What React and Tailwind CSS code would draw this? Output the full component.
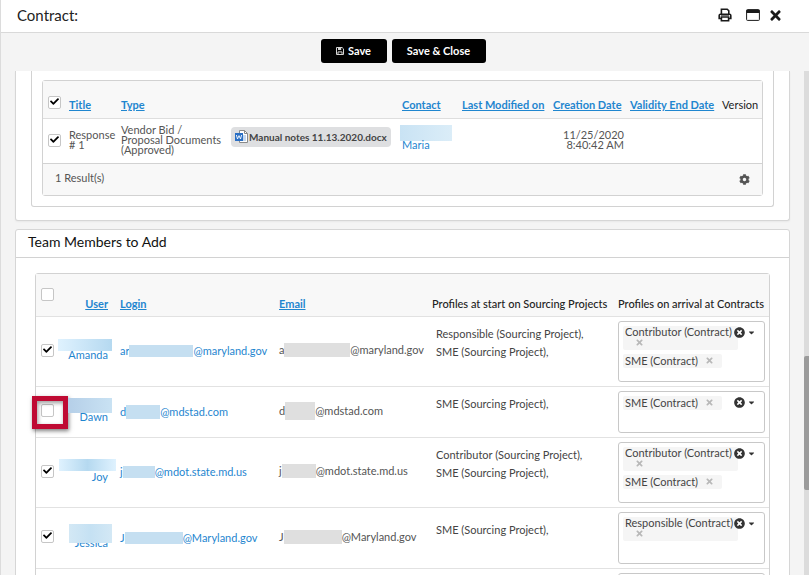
import { FaCheck, FaTimes, FaTimesCircle, FaCaretDown, FaCog } from 'react-icons/fa';

const teamMembers = [
  {
    name: 'Amanda',
    checked: true,
    nameMask: 'w-[54px] h-3 -mr-1 from-sky-100 to-[#b5d9f0]',
    nameClass: '',
    initial: 'ar',
    domain: '@maryland.gov',
    loginMask: 'w-16 h-3',
    emailInitial: 'a',
    emailMask: 'w-[68px] h-[14px]',
    start: ['Responsible (Sourcing Project),', 'SME (Sourcing Project),'],
    startClass: 'pt-2',
    arrival: ['Contributor (Contract)', 'SME (Contract)'],
    boxClass: 'h-[61px]',
  },
  {
    name: 'Dawn',
    checked: false,
    highlighted: true,
    nameMask: 'w-11 h-[15px] -mr-1 from-[#b5cfe8] to-[#c9e2f3]',
    nameClass: '',
    initial: 'd',
    domain: '@mdstad.com',
    loginMask: 'w-[34px] h-[14px]',
    emailInitial: 'd',
    emailMask: 'w-[30px] h-[18px]',
    start: ['SME (Sourcing Project),'],
    startClass: 'pt-2',
    arrival: ['SME (Contract)'],
    boxClass: 'h-[42px]',
  },
  {
    name: 'Joy',
    checked: true,
    nameMask: 'w-[57px] h-3 -mr-2 from-sky-100 via-[#b5d9f0] to-sky-100',
    nameClass: 'mt-0.5',
    initial: 'j',
    domain: '@mdot.state.md.us',
    loginMask: 'w-8 h-3',
    emailInitial: 'j',
    emailMask: 'w-[34px] h-[14px]',
    start: ['Contributor (Sourcing Project),', 'SME (Sourcing Project),'],
    startClass: 'pt-2',
    arrival: ['Contributor (Contract)', 'SME (Contract)'],
    boxClass: 'h-[61px]',
  },
  {
    name: 'Jessica',
    checked: true,
    nameMask: 'w-[43px] h-[19px] -mr-1 from-[#d3e8f5] via-[#c5e1f3] to-[#d3e8f5]',
    nameClass: '-mt-1',
    initial: 'J',
    domain: '@Maryland.gov',
    loginMask: 'w-[58px] h-3',
    emailInitial: 'J',
    emailMask: 'w-[58px] h-[14px]',
    start: ['SME (Sourcing Project),'],
    startClass: 'pt-[13px]',
    arrival: ['Responsible (Contract)'],
    boxClass: 'h-[52px]',
  },
];

const CheckBox = ({ label, checked = false }) => (
  <span className="relative block h-[13px] w-[13px]">
    <input
      type="checkbox"
      aria-label={label}
      defaultChecked={checked}
      className="peer block h-[13px] w-[13px] appearance-none rounded-xs border border-[#c6c6c6] bg-white"
    />
    <FaCheck className="pointer-events-none absolute top-px left-0.5 hidden h-[9px] w-[9px] text-black peer-checked:block" />
  </span>
);

const SortLink = ({ children }) => (
  <a href="#" className="font-bold text-[#1f86cf] underline">
    {children}
  </a>
);

const PrintIcon = () => (
  <svg viewBox="0 0 14 14" className="h-[14px] w-[14px]" fill="none" stroke="currentColor" strokeWidth="1.6">
    <path d="M3.4 6V1.2h5.8l1.6 1.6V6" />
    <path d="M3.4 10.5H1.2V7.6q0-1.3 1.3-1.3h9q1.3 0 1.3 1.3v2.9h-2" />
    <path d="M3.4 9h7.2v3.8H3.4z" />
    <path d="M3 6.8h8" />
  </svg>
);

const WindowIcon = () => (
  <svg viewBox="0 0 14 12" className="h-3 w-[14px]">
    <rect x="0.6" y="0.6" width="12.8" height="10.8" rx="0.8" fill="white" stroke="currentColor" strokeWidth="1" />
    <path d="M0.5 1h13v3h-13z" fill="currentColor" />
  </svg>
);

const SaveIcon = () => (
  <svg viewBox="0 0 8 8" className="h-2 w-2" fill="none" stroke="#d4d4d4" strokeWidth="1">
    <path d="M.5.5h5.6l1.4 1.4v5.6h-7z" />
    <path d="M2 1h3.2v2H2z" fill="#d4d4d4" stroke="none" />
    <path d="M2 7.2V4.9h4v2.3" />
  </svg>
);

const WordIcon = () => (
  <svg viewBox="0 0 13 13" className="h-[13px] w-[13px] shrink-0">
    <path d="M4.5.5h5l3 3v9h-8z" fill="white" stroke="#8a8a8a" />
    <path d="M9.5.5v3h3" fill="none" stroke="#8a8a8a" />
    <path d="M8 6h3M8 8h3M8 10h3" stroke="#6f9fd8" strokeWidth="0.8" />
    <path d="M0 3h8v8H0z" fill="#2a6fc4" />
    <path d="M1.4 5l1.1 4L4 5.6 5.5 9l1.1-4" fill="none" stroke="white" strokeWidth="0.9" />
  </svg>
);

const ProfilePicker = ({ member }) => (
  <div
    role="group"
    aria-label={`Profiles for ${member.name}`}
    className={`relative flex flex-col items-start gap-1 rounded-[3px] border border-[#c8c8c8] bg-white p-1 ${member.boxClass}`}
  >
    {member.arrival.map((profile) => {
      const long = profile.length > 15;
      return (
        <div
          key={profile}
          className={`flex rounded-xs bg-[#f5f5f5] leading-3 ${long ? 'h-6 w-[115px] flex-col items-start px-0.5' : 'h-[14px] w-[99px] items-center justify-between pr-2 pl-0.5'}`}
        >
          <span className="whitespace-nowrap">{profile}</span>
          <button type="button" aria-label={`Remove ${profile}`} className={long ? 'ml-[10px]' : ''}>
            <FaTimes className="h-[9px] w-[9px] text-[#b8b8b8]" />
          </button>
        </div>
      );
    })}
    <div className="absolute top-[5px] right-2 flex items-center gap-0.5 text-[#333]">
      <button type="button" aria-label="Clear">
        <FaTimesCircle className="h-[11px] w-[11px]" />
      </button>
      <button type="button" aria-label="Open">
        <FaCaretDown className="h-[9px] w-[9px]" />
      </button>
    </div>
  </div>
);

const TitleBar = () => (
  <header className="flex h-[33px] shrink-0 items-center justify-between border-b border-[#d9d9d9] bg-white pr-[26px] pb-0.5 pl-4">
    <h1 className="text-[15px] text-[#222]">Contract:</h1>
    <div className="flex items-center text-[#1a1a1a]">
      <button type="button" aria-label="Print" className="mr-[14px]">
        <PrintIcon />
      </button>
      <button type="button" aria-label="Maximize" className="mr-2">
        <WindowIcon />
      </button>
      <button type="button" aria-label="Close">
        <FaTimes className="h-[15px] w-[15px]" />
      </button>
    </div>
  </header>
);

const ResponsesTable = () => (
  <div className="rounded-[3px] border border-[#d2d2d2]">
    <table className="w-full table-fixed border-collapse text-left">
      <colgroup>
        <col className="w-[22px]" />
        <col className="w-[52px]" />
        <col className="w-[110px]" />
        <col />
        <col className="w-[60px]" />
        <col className="w-[91px]" />
        <col className="w-[77px]" />
        <col className="w-[92px]" />
        <col className="w-11" />
      </colgroup>
      <thead>
        <tr className="h-[37px] border-b border-[#dedede] bg-[#f8f8f8] whitespace-nowrap">
          <th className="pt-1.5 pl-[5px]">
            <CheckBox label="Select all responses" checked />
          </th>
          <th className="px-1 pt-3"><SortLink>Title</SortLink></th>
          <th className="px-1 pt-3"><SortLink>Type</SortLink></th>
          <th aria-label="Document" />
          <th className="px-1 pt-3"><SortLink>Contact</SortLink></th>
          <th className="px-1 pt-3"><SortLink>Last Modified on</SortLink></th>
          <th className="px-1 pt-3"><SortLink>Creation Date</SortLink></th>
          <th className="px-1 pt-3"><SortLink>Validity End Date</SortLink></th>
          <th className="px-1 pt-3 font-normal text-[#222]">Version</th>
        </tr>
      </thead>
      <tbody>
        <tr className="h-[45px] leading-[10px]">
          <td className="pl-[5px]">
            <CheckBox label="Select Response # 1" checked />
          </td>
          <td className="px-1 pb-0.5">Response # 1</td>
          <td className="px-1 pb-0.5">Vendor Bid / Proposal Documents (Approved)</td>
          <td className="px-1 pb-2">
            <a href="#" className="flex h-5 w-fit items-center gap-px rounded bg-[#dedfe1] px-1 text-[10px] font-bold whitespace-nowrap text-[#444]">
              <WordIcon />
              Manual notes 11.13.2020.docx
            </a>
          </td>
          <td className="pb-2">
            <div className="ml-0.5 h-4 w-[52px] bg-linear-to-r from-[#c9e3f4] to-[#dbedf8]" />
            <a href="#" className="block px-1 leading-2 text-[#1f86cf]">Maria</a>
          </td>
          <td />
          <td className="pr-0.5 pb-0.5 text-right">11/25/2020 8:40:42 AM</td>
          <td />
          <td />
        </tr>
      </tbody>
    </table>
    <div className="flex h-8 items-center justify-between border-t border-[#d2d2d2] bg-[#f8f8f8] px-3">
      <span className="pb-1">1 Result(s)</span>
      <button type="button" aria-label="Settings">
        <FaCog className="h-[11px] w-[11px] text-[#555]" />
      </button>
    </div>
  </div>
);

const MemberRow = ({ member }) => (
  <tr className="border-t border-[#e2e2e2]">
    <td className="pb-0.5 pl-[5px]">
      <div className="relative">
        <CheckBox label={`Select ${member.name}`} checked={member.checked} />
        {member.highlighted && (
          <div className="pointer-events-none absolute -top-2 -left-[9px] h-[33px] w-9 border-5 border-[#bf0a33] shadow-[1px_2px_4px_rgba(0,0,0,0.5),inset_1px_2px_4px_rgba(0,0,0,0.4)]" />
        )}
      </div>
    </td>
    <td className="pr-2 pb-1">
      <div className="flex flex-col items-end">
        <div className={`relative z-10 bg-linear-to-r ${member.nameMask}`} />
        <a href="#" className={`leading-2 text-[#1f86cf] ${member.nameClass}`}>{member.name}</a>
      </div>
    </td>
    <td className="px-1">
      <a href="#" className="flex items-center text-[#1f86cf]">
        {member.initial}
        <span className={`bg-[#c5dff1] ${member.loginMask}`} />
        {member.domain}
      </a>
    </td>
    <td className="px-1 pb-0.5">
      <div className="flex items-center">
        {member.emailInitial}
        <span className={`bg-[#dfdfdf] ${member.emailMask}`} />
        {member.domain}
      </div>
    </td>
    <td className={`px-2 align-top leading-[18px] text-[#444] ${member.startClass}`}>
      {member.start.map((profile) => (
        <div key={profile}>{profile}</div>
      ))}
    </td>
    <td className="px-1 py-1 align-top text-[#444]">
      <ProfilePicker member={member} />
    </td>
  </tr>
);

const TeamTable = () => (
  <div className="rounded-[3px] border border-[#d2d2d2]">
    <table className="w-full table-fixed border-collapse text-left">
      <colgroup>
        <col className="w-[22px]" />
        <col className="w-[58px]" />
        <col className="w-[159px]" />
        <col className="w-[153px]" />
        <col />
        <col className="w-[155px]" />
      </colgroup>
      <thead>
        <tr className="h-[42px] bg-[#f8f8f8] whitespace-nowrap">
          <th className="pl-[5px]">
            <CheckBox label="Select all team members" />
          </th>
          <th className="pt-[18px] pr-2 text-right"><SortLink>User</SortLink></th>
          <th className="px-1 pt-[18px]"><SortLink>Login</SortLink></th>
          <th className="px-1 pt-[18px]"><SortLink>Email</SortLink></th>
          <th className="px-1 pt-[18px] font-medium text-[#222]">Profiles at start on Sourcing Projects</th>
          <th className="px-1 pt-[18px] font-medium text-[#222]">Profiles on arrival at Contracts</th>
        </tr>
      </thead>
      <tbody>
        {teamMembers.map((member) => (
          <MemberRow key={member.name} member={member} />
        ))}
        <tr className="border-t border-[#e2e2e2]">
          <td colSpan={5} />
          <td className="px-1 py-1">
            <div className="h-10 rounded-[3px] border border-[#c8c8c8] bg-white" />
          </td>
        </tr>
      </tbody>
    </table>
  </div>
);

export default function App() {
  return (
    <div className="flex h-screen flex-col overflow-hidden border-l border-[#dcdcdc] bg-[#f4f4f4] font-['Lato',sans-serif] text-[11px] leading-[14px] text-[#555]">
      <TitleBar />
      <div className="flex h-[38px] shrink-0 items-start justify-center gap-[5px] pt-1.5 pr-1 font-bold text-white">
        <button type="button" className="flex h-6 w-[66px] items-center justify-center gap-1 rounded-[3px] bg-black">
          <SaveIcon />
          Save
        </button>
        <button type="button" className="h-6 w-[94px] rounded-[3px] bg-black">
          Save &amp; Close
        </button>
      </div>
      <div className="flex min-h-0 flex-1">
        <main className="min-w-0 flex-1 overflow-hidden pr-[14px] pl-[14px]">
          <section className="rounded-b-[3px] border border-t-0 border-[#d6d6d6] bg-white px-[15px] pb-[13px] shadow-xs">
            <div className="rounded-b-[3px] border border-t-0 border-[#d2d2d2] px-[10px] pt-[9px] pb-[10px]">
              <ResponsesTable />
            </div>
          </section>
          <section className="mt-2 rounded-t-[3px] border border-[#d6d6d6] bg-white">
            <h2 className="border-b border-[#d2d2d2] px-3 pt-[3px] pb-1.5 text-sm leading-[18px] text-[#111]">
              Team Members to Add
            </h2>
            <div className="px-[19px] pt-[15px]">
              <TeamTable />
            </div>
          </section>
        </main>
        <div className="w-[5px] shrink-0 bg-[#dcdcdc] pt-[285px]">
          <div className="h-[134px] rounded-l-xs bg-[#9b9b9b]" />
        </div>
      </div>
    </div>
  );
}
